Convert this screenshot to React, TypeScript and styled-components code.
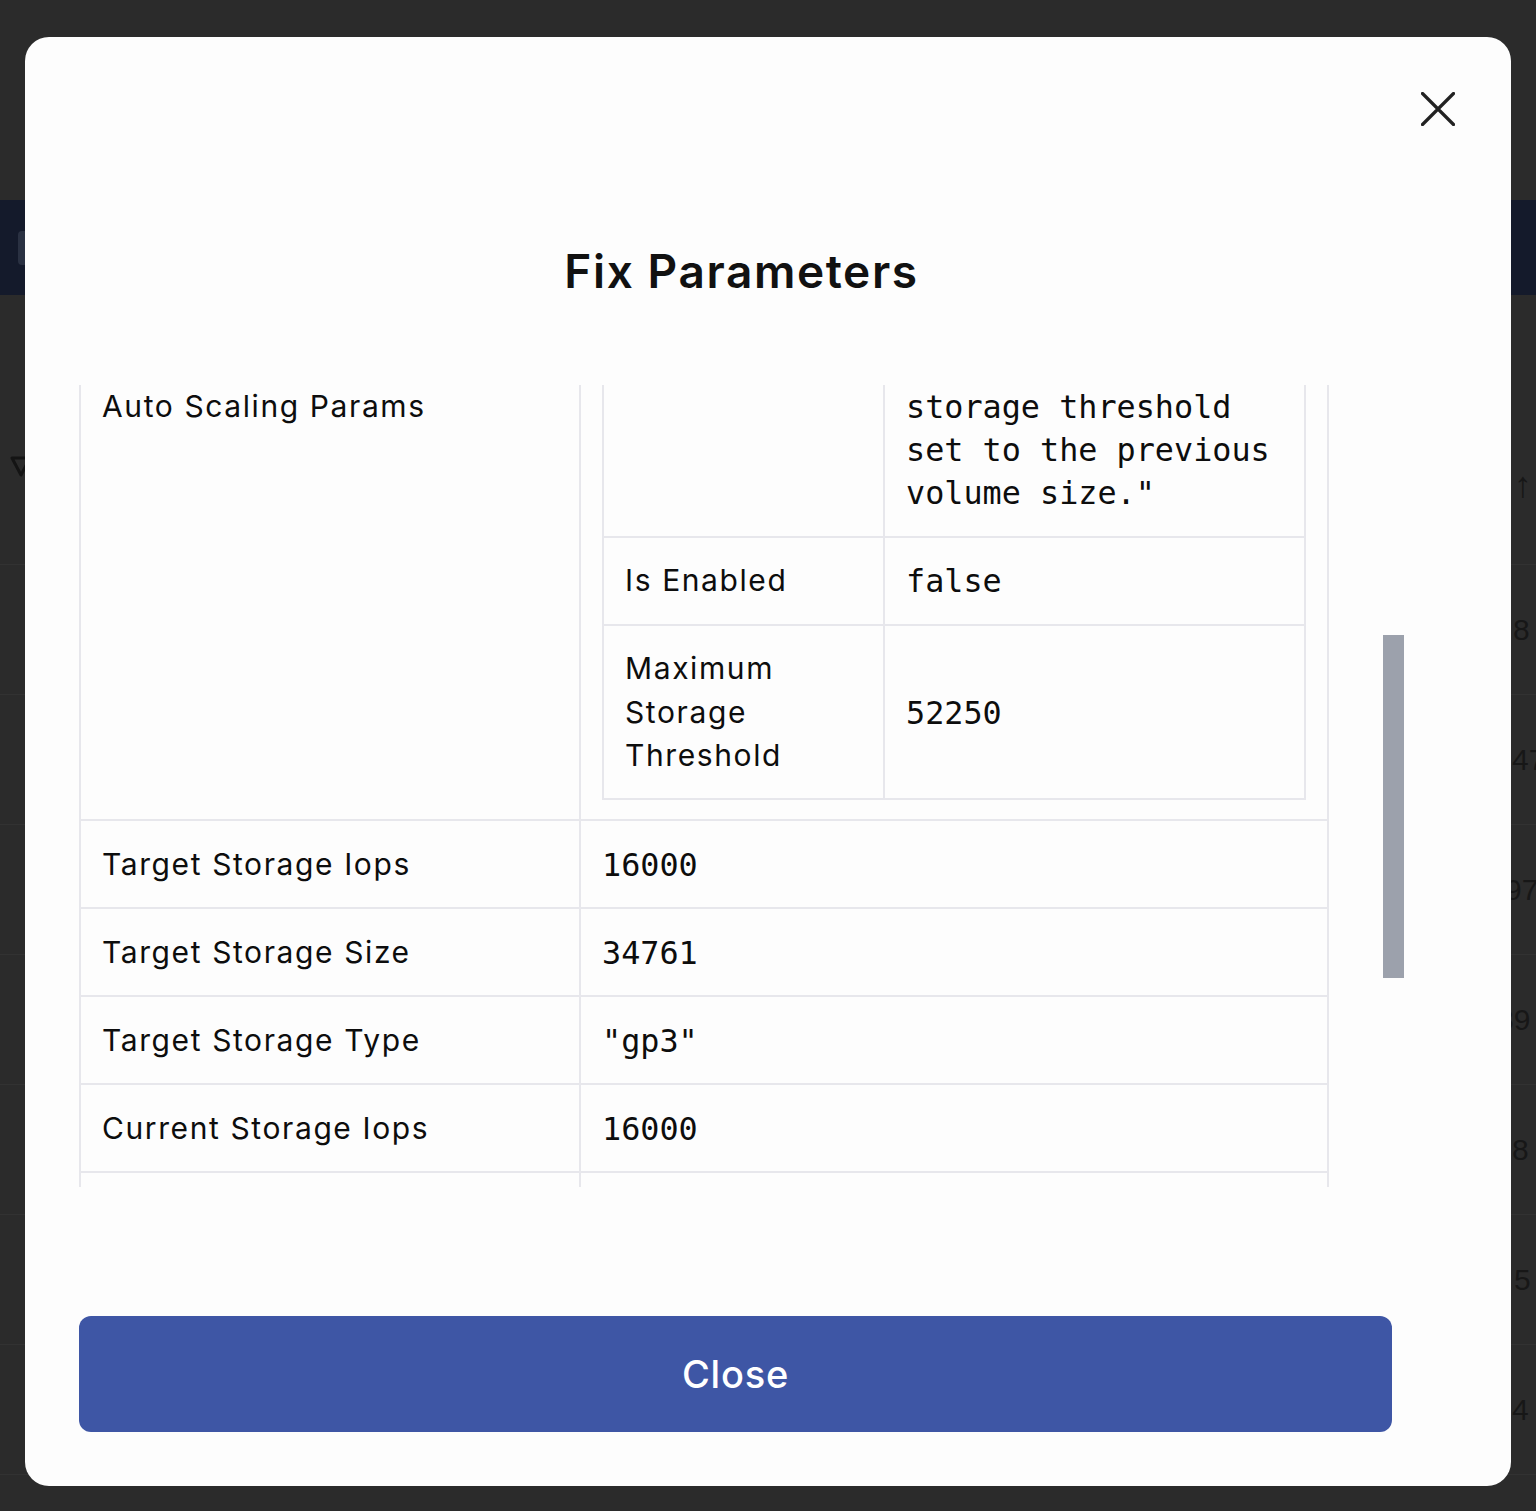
import React from "react";
import styled, { createGlobalStyle } from "styled-components";

const GlobalStyle = createGlobalStyle`
  html, body {
    margin: 0;
    padding: 0;
  }
  body {
    background: #2b2b2b;
    font-family: Inter, "Noto Sans", sans-serif;
    overflow: hidden;
  }
`;

const Page = styled.div`
  position: relative;
  width: 1536px;
  height: 1511px;
  background: #2b2b2b;
  overflow: hidden;
`;

const NavBand = styled.div`
  margin-top: 200px;
  height: 95px;
  background: #141a2b;
  display: flex;
  align-items: center;
  padding-left: 18px;
`;

const NavChip = styled.div`
  width: 60px;
  height: 34px;
  border-radius: 4px;
  background: #2a3142;
`;

const BgBody = styled.div`
  margin-top: 140px;
`;

const BgRow = styled.div<{ $head?: boolean }>`
  height: 130px;
  box-sizing: border-box;
  border-bottom: 1px solid #323232;
  display: flex;
  align-items: ${(p) => (p.$head ? "flex-start" : "center")};
  padding: ${(p) => (p.$head ? "20px 0 0 10px" : "0 0 0 10px")};
  color: #171717;
  font-family: "Liberation Sans", Arial, sans-serif;
  font-size: 30px;
`;

const BgNum = styled.span<{ $x: number; $big?: boolean }>`
  margin-left: auto;
  width: ${(p) => 1536 - p.$x}px;
  white-space: nowrap;
  font-size: ${(p) => (p.$big ? "36px" : "30px")};
  line-height: ${(p) => (p.$big ? "60px" : "normal")};
`;

const Overlay = styled.div`
  position: absolute;
  inset: 0;
  padding: 37px 0 0 25px;
`;

const Modal = styled.div`
  position: relative;
  width: 1486px;
  height: 1449px;
  box-sizing: border-box;
  background: #fdfdfd;
  border-radius: 24px;
  padding: 0 0 54px 54px;
  display: flex;
  flex-direction: column;
`;

const CloseIcon = styled.button`
  position: absolute;
  top: 55px;
  right: 56px;
  width: 34px;
  height: 34px;
  padding: 0;
  border: none;
  background: transparent;
  color: #222;
  cursor: pointer;
`;

const Title = styled.h2`
  margin: 202px 0 0 0;
  width: 1325px;
  height: 65px;
  line-height: 65px;
  text-align: center;
  font-size: 46px;
  font-weight: 600;
  letter-spacing: 1.6px;
  color: #111;
`;

const ScrollArea = styled.div`
  margin-top: 81px;
  height: 802px;
  width: 1325px;
  display: flex;
`;

const Viewport = styled.div`
  width: 1250px;
  height: 100%;
  overflow: hidden;
`;

const Track = styled.div`
  margin-left: 54px;
  width: 21px;
`;

const Thumb = styled.div`
  margin-top: 250px;
  height: 343px;
  background: #9ca1ac;
`;

const Table = styled.table`
  width: 100%;
  border-collapse: collapse;
  table-layout: fixed;
`;

const Col = styled.col<{ $w?: number }>`
  width: ${(p) => (p.$w ? `${p.$w}px` : "auto")};
`;

const Td = styled.td<{ $cut?: boolean; $mono?: boolean; $tail?: number }>`
  border: 2px solid #e7e7ec;
  border-top: ${(p) => (p.$cut ? "none" : "2px solid #e7e7ec")};
  padding: ${(p) =>
    p.$cut ? `0 21px ${p.$tail ?? 21.4}px 21px` : "21.4px 21px"};
  vertical-align: middle;
  color: #0d0d0d;
  font-family: ${(p) =>
    p.$mono
      ? `"DejaVu Sans Mono", "Liberation Mono", monospace`
      : `Inter, "Noto Sans", sans-serif`};
  font-size: ${(p) => (p.$mono ? "31.8px" : "30px")};
  letter-spacing: ${(p) => (p.$mono ? "0" : "1.6px")};
  line-height: 43.2px;
  white-space: pre-line;
  word-break: break-word;
`;

const CloseButton = styled.button`
  margin-top: 129px;
  width: 1313px;
  height: 116px;
  border: none;
  border-radius: 12px;
  background: #3e56a5;
  color: #fff;
  font-family: Inter, "Noto Sans", sans-serif;
  font-size: 38px;
  font-weight: 500;
  letter-spacing: 0.8px;
  cursor: pointer;
`;

const bgNums = [
  { t: "8", x: 1513 },
  { t: "47", x: 1512 },
  { t: "97", x: 1505 },
  { t: "39", x: 1497 },
  { t: "8", x: 1512 },
  { t: "5", x: 1514 },
  { t: "4", x: 1512 },
];

const rows = [
  { label: "Target Storage Iops", value: "16000" },
  { label: "Target Storage Size", value: "34761" },
  { label: "Target Storage Type", value: '"gp3"' },
  { label: "Current Storage Iops", value: "16000" },
];

const XIcon = () => (
  <svg width="34" height="34" viewBox="0 0 34 34" fill="none">
    <path
      d="M1.5 1.5 L32.5 32.5 M32.5 1.5 L1.5 32.5"
      stroke="currentColor"
      strokeWidth="3.2"
      strokeLinecap="round"
    />
  </svg>
);

const FilterIcon = () => (
  <svg width="22" height="24" viewBox="0 0 22 24" fill="none">
    <path d="M2 3 H20 L11 20 Z" stroke="#141414" strokeWidth="3" strokeLinejoin="round" />
  </svg>
);

const App = () => {
  return (
    <Page>
      <GlobalStyle />
      <NavBand>
        <NavChip />
      </NavBand>
      <BgBody>
        <BgRow $head>
          <FilterIcon />
          <BgNum $x={1514} $big>
            ↑
          </BgNum>
        </BgRow>
        {bgNums.map((n, i) => (
          <BgRow key={i}>
            <BgNum $x={n.x}>{n.t}</BgNum>
          </BgRow>
        ))}
      </BgBody>

      <Overlay>
        <Modal>
          <CloseIcon aria-label="Close">
            <XIcon />
          </CloseIcon>
          <Title>Fix Parameters</Title>
          <ScrollArea>
            <Viewport>
              <Table>
                <colgroup>
                  <Col $w={500} />
                  <Col />
                </colgroup>
                <tbody>
                  <tr>
                    <Td $cut $tail={19} style={{ verticalAlign: "top" }}>
                      Auto Scaling Params
                    </Td>
                    <Td $cut $tail={19}>
                      <Table>
                        <colgroup>
                          <Col $w={281} />
                          <Col />
                        </colgroup>
                        <tbody>
                          <tr>
                            <Td $cut />
                            <Td $cut $mono>
                              {"storage threshold\nset to the previous\nvolume size.\""}
                            </Td>
                          </tr>
                          <tr>
                            <Td>Is Enabled</Td>
                            <Td $mono>false</Td>
                          </tr>
                          <tr>
                            <Td>{"Maximum\nStorage\nThreshold"}</Td>
                            <Td $mono>52250</Td>
                          </tr>
                        </tbody>
                      </Table>
                    </Td>
                  </tr>
                  {rows.map((r) => (
                    <tr key={r.label}>
                      <Td>{r.label}</Td>
                      <Td $mono>{r.value}</Td>
                    </tr>
                  ))}
                  <tr>
                    <Td>{"\u00a0"}</Td>
                    <Td $mono>{"\u00a0"}</Td>
                  </tr>
                </tbody>
              </Table>
            </Viewport>
            <Track>
              <Thumb />
            </Track>
          </ScrollArea>
          <CloseButton>Close</CloseButton>
        </Modal>
      </Overlay>
    </Page>
  );
};

export default App;
